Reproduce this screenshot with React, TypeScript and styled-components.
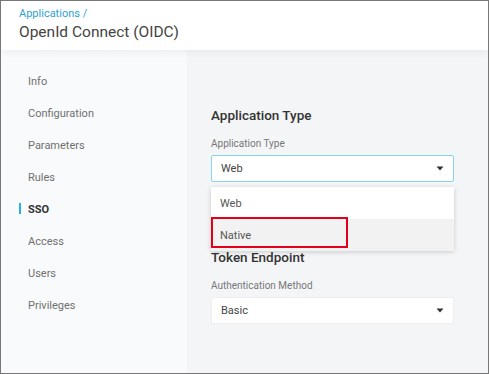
import styled, { createGlobalStyle } from "styled-components";

const GlobalStyle = createGlobalStyle`
  html, body {
    margin: 0;
    padding: 0;
    background: #ffffff;
  }
  * {
    box-sizing: border-box;
  }
`;

const menuItems = [
  "Info",
  "Configuration",
  "Parameters",
  "Rules",
  "SSO",
  "Access",
  "Users",
  "Privileges",
];

const Caret = () => (
  <svg width="8" height="5" viewBox="0 0 8 5">
    <path d="M0.5 0.5 L7.5 0.5 L4 4.5 Z" fill="#333" />
  </svg>
);

const App = () => {
  return (
    <>
      <GlobalStyle />
      <Frame>
        <Header>
          <Breadcrumb>Applications /</Breadcrumb>
          <Title>OpenId Connect (OIDC)</Title>
        </Header>
        <Body>
          <Sidebar>
            {menuItems.map((item) => (
              <MenuItem key={item} $active={item === "SSO"}>
                {item}
              </MenuItem>
            ))}
          </Sidebar>
          <Main>
            <Section>
              <SectionTitle>Application Type</SectionTitle>
              <FieldLabel>Application Type</FieldLabel>
              <SelectWrap>
                <Select $focused>
                  <span>Web</span>
                  <Caret />
                </Select>
                <Dropdown>
                  <Option>Web</Option>
                  <Option $hover>
                    Native
                    <Highlight />
                  </Option>
                </Dropdown>
              </SelectWrap>
            </Section>
            <Section>
              <SectionTitle>Token Endpoint</SectionTitle>
              <FieldLabel>Authentication Method</FieldLabel>
              <Select>
                <span>Basic</span>
                <Caret />
              </Select>
            </Section>
          </Main>
        </Body>
      </Frame>
    </>
  );
};

const Frame = styled.div`
  width: 489px;
  height: 374px;
  border: 1px solid #777777;
  display: flex;
  flex-direction: column;
  font-family: Roboto, "Liberation Sans", sans-serif;
  overflow: hidden;
`;

const Header = styled.div`
  height: 49px;
  flex-shrink: 0;
  background: #ffffff;
  padding: 6px 0 0 18px;
  position: relative;
  z-index: 1;
  box-shadow: 0 2px 8px rgba(0, 0, 0, 0.06);
`;

const Breadcrumb = styled.div`
  font-size: 11px;
  line-height: 14px;
  color: #2c9fd3;
`;

const Title = styled.div`
  font-size: 15.5px;
  line-height: 22px;
  color: #444444;
`;

const Body = styled.div`
  flex: 1;
  display: flex;
`;

const Sidebar = styled.div`
  width: 186px;
  flex-shrink: 0;
  background: #f9fafb;
  padding-top: 15px;
  display: flex;
  flex-direction: column;
`;

const MenuItem = styled.div<{ $active?: boolean }>`
  height: 32px;
  display: flex;
  align-items: center;
  padding-left: 27px;
  font-size: 11px;
  position: relative;
  color: ${({ $active }) => ($active ? "#333333" : "#707070")};
  font-weight: ${({ $active }) => ($active ? 700 : 400)};

  &::before {
    content: "";
    display: ${({ $active }) => ($active ? "block" : "none")};
    position: absolute;
    left: 18px;
    top: 10px;
    width: 2px;
    height: 11px;
    background: #29aee6;
  }
`;

const Main = styled.div`
  flex: 1;
  background: #f4f5f7;
  padding: 56px 0 0 24px;
  display: flex;
  flex-direction: column;
  gap: 66px;
`;

const Section = styled.div`
  width: 243px;
  display: flex;
  flex-direction: column;
`;

const SectionTitle = styled.div`
  font-size: 13.5px;
  font-weight: 500;
  line-height: 18px;
  color: #333333;
`;

const FieldLabel = styled.div`
  margin-top: 13px;
  font-size: 10px;
  line-height: 14px;
  color: #777777;
`;

const SelectWrap = styled.div`
  position: relative;
`;

const Select = styled.div<{ $focused?: boolean }>`
  margin-top: 4px;
  height: 27px;
  background: #ffffff;
  border: 1px solid ${({ $focused }) => ($focused ? "#86d3ef" : "#eceef0")};
  border-radius: 2px;
  display: flex;
  align-items: center;
  justify-content: space-between;
  padding: 0 9px 0 9px;
  font-size: 11px;
  color: #444444;
`;

const Dropdown = styled.div`
  position: absolute;
  left: 0;
  right: 0;
  top: 36px;
  background: #ffffff;
  border-radius: 2px;
  box-shadow: 0 1px 5px rgba(0, 0, 0, 0.18);
  z-index: 2;
`;

const Option = styled.div<{ $hover?: boolean }>`
  position: relative;
  height: 32px;
  display: flex;
  align-items: center;
  padding-left: 9px;
  font-size: 11px;
  color: #555555;
  background: ${({ $hover }) => ($hover ? "#f2f2f2" : "#ffffff")};
`;

const Highlight = styled.div`
  position: absolute;
  left: 0;
  top: -2px;
  width: 137px;
  height: 31px;
  border: 2px solid #e3001b;
`;

export default App;
